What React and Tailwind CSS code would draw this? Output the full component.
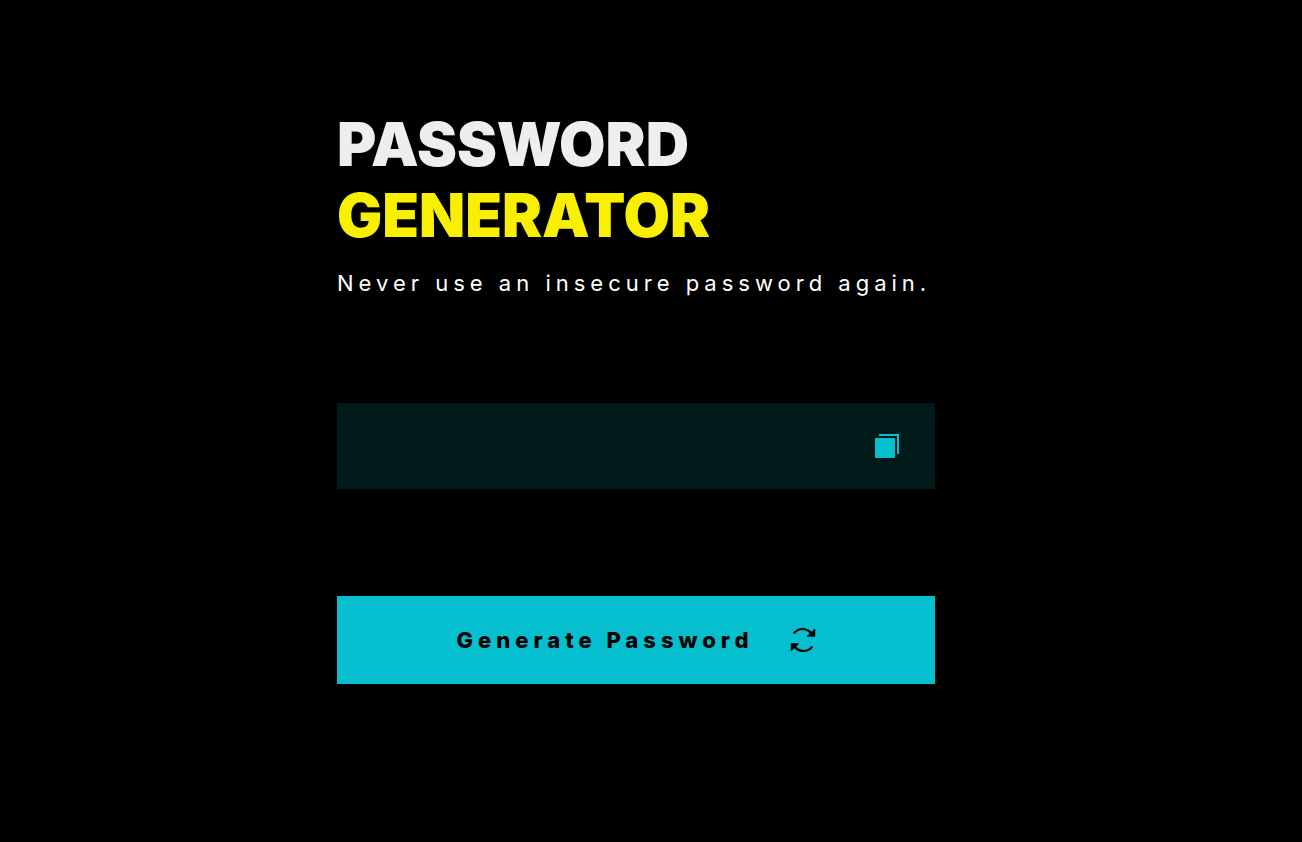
import React, { useState } from "react";

const CHARSET =
  "ABCDEFGHIJKLMNOPQRSTUVWXYZabcdefghijklmnopqrstuvwxyz0123456789!@#$%&*";

function createPassword(length) {
  const values = crypto.getRandomValues(new Uint32Array(length));
  return Array.from(values, (v) => CHARSET[v % CHARSET.length]).join("");
}

function CopyIcon() {
  return (
    <svg viewBox="0 0 26 26" className="h-[26px] w-[26px]" aria-hidden="true">
      <rect x="1" y="5" width="20" height="20" rx="1" fill="#05bfcf" />
      <path d="M5 2H24V21" fill="none" stroke="#05bfcf" strokeWidth="2" />
    </svg>
  );
}

function RefreshIcon() {
  return (
    <svg viewBox="0 0 26 26" className="h-[26px] w-[26px]" aria-hidden="true">
      <path
        d="M4.2 5.8C8.6 0.9 15.8 0.7 20.6 5.4M21.8 20.2C17.4 25.1 10.2 25.3 5.4 20.6"
        fill="none"
        stroke="#000"
        strokeWidth="2.2"
        strokeLinecap="round"
      />
      <path
        d="M24.4 1.9Q25.2 1.4 25.2 2.4V8.8Q25.2 9.8 24.2 9.8H17.4Q16.2 9.8 17 9ZM1.6 24.1Q0.8 24.6 0.8 23.6V17.2Q0.8 16.2 1.8 16.2H8.6Q9.8 16.2 9 17Z"
        fill="#000"
      />
    </svg>
  );
}

export default function App() {
  const [password, setPassword] = useState("");

  return (
    <div className="min-h-screen bg-black pt-[109px] pr-[46px] pb-16 pl-4 font-['Inter',sans-serif]">
      <main className="mx-auto w-full max-w-[598px]">
        <h1 className="text-[60px] leading-[71px] font-black text-[#eeeeee]">
          PASSWORD
          <span className="block text-[#f9f000]">GENERATOR</span>
        </h1>
        <p className="mt-4 text-[22px] leading-8 tracking-[5px] text-white">
          Never use an insecure password again.
        </p>

        <div className="mt-[104px] flex h-[86px] items-center bg-[#001a1a] pr-[35px] pl-8">
          <input
            type="text"
            readOnly
            value={password}
            aria-label="Generated password"
            className="h-full min-w-0 flex-1 bg-transparent text-[22px] text-white outline-none"
          />
          <button
            type="button"
            aria-label="Copy password"
            onClick={() => navigator.clipboard?.writeText(password)}
          >
            <CopyIcon />
          </button>
        </div>

        <button
          type="button"
          onClick={() => setPassword(createPassword(15))}
          className="mt-[107px] flex h-[88px] w-full items-center justify-center gap-9 bg-[#05bfcf] text-[22px] font-extrabold tracking-[5px] text-black"
        >
          Generate Password
          <RefreshIcon />
        </button>
      </main>
    </div>
  );
}
